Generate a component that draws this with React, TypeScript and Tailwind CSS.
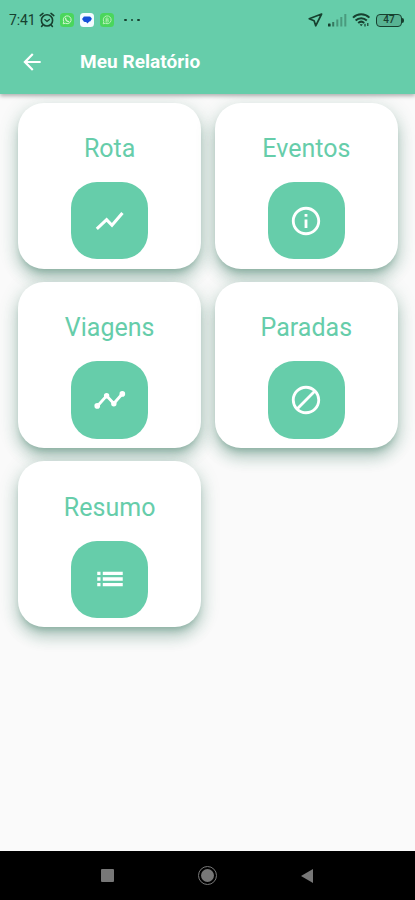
import type { ReactNode } from 'react'
import { MdArrowBack, MdBlock, MdInfoOutline } from 'react-icons/md'

function RouteIcon() {
  return (
    <svg width="34" height="34" viewBox="0 0 24 24" fill="none" stroke="currentColor" strokeWidth="2.2">
      <path d="M2.7 17.5 9.6 11.1l3.8 3.9 7.4-8.6" />
    </svg>
  )
}

function TripsIcon() {
  return (
    <svg width="34" height="34" viewBox="0 0 24 24" fill="currentColor">
      <path d="M3 16.4 9.6 9l5.1 5.5 6-6.9" fill="none" stroke="currentColor" strokeWidth="2" />
      <circle cx="3" cy="16.2" r="2" />
      <circle cx="9.6" cy="9" r="1.9" />
      <circle cx="14.7" cy="14.6" r="1.9" />
      <circle cx="20.7" cy="7.7" r="2" />
    </svg>
  )
}

function SummaryIcon() {
  return (
    <svg width="34" height="34" viewBox="0 0 24 24" fill="currentColor">
      <path d="M3 6.8h2.3v2.3H3zM3 10.85h2.3v2.3H3zM3 14.9h2.3v2.3H3z" />
      <path d="M6.9 6.8H21v2.3H6.9zM6.9 10.85H21v2.3H6.9zM6.9 14.9H21v2.3H6.9z" />
    </svg>
  )
}

const reports: { name: string; icon: ReactNode }[] = [
  { name: 'Rota',    icon: <RouteIcon /> },
  { name: 'Eventos', icon: <MdInfoOutline size={34} /> },
  { name: 'Viagens', icon: <TripsIcon /> },
  { name: 'Paradas', icon: <MdBlock size={34} /> },
  { name: 'Resumo',  icon: <SummaryIcon /> },
]

function AlarmIcon() {
  return (
    <svg width="16" height="16" viewBox="0 0 16 16" fill="none" stroke="#17402f" strokeWidth="1.6" strokeLinecap="round">
      <circle cx="8" cy="8.4" r="5.6" />
      <path d="M1.2 3.6 4 1.4M14.8 3.6 12 1.4M3.6 13.2l-1 1.2M12.4 13.2l1 1.2" />
      <path d="M5.8 7.6 8 9.4l2.4-2" strokeWidth="1.3" />
    </svg>
  )
}

function ChatBadge() {
  return (
    <svg width="14" height="14" viewBox="0 0 14 14" fill="none">
      <rect width="14" height="14" rx="3.5" fill="#4ad65c" />
      <path d="m3.2 10.8.6-2.1a3.9 3.9 0 1 1 1.5 1.5z" stroke="#d2f7cf" strokeWidth="1" />
      <path d="M5.6 5.2c0 2 1.4 3.2 3.1 3.4" stroke="#d2f7cf" strokeWidth="1.2" strokeLinecap="round" />
    </svg>
  )
}

function MessageBadge() {
  return (
    <svg width="14" height="14" viewBox="0 0 14 14">
      <rect width="14" height="14" rx="3.5" fill="#f4fbff" />
      <path d="M4.6 3.4h4.8a1.5 1.5 0 0 1 1.5 1.2c1.1.3 1.1 2.3 0 2.6a1.7 1.7 0 0 1-1.5 1.4L7.3 10.4 6.2 8.9H4.8A1.7 1.7 0 0 1 3.2 7.4c-1.2-.3-1.2-2.4-.1-2.7a1.6 1.6 0 0 1 1.5-1.3z" fill="#1450d8" />
    </svg>
  )
}

function BusinessBadge() {
  return (
    <svg width="14" height="14" viewBox="0 0 14 14" fill="none">
      <rect width="14" height="14" rx="3.5" fill="#4ad65c" />
      <path d="m3.2 10.8.6-2.1a3.9 3.9 0 1 1 1.5 1.5z" stroke="#b9f2b9" strokeWidth="1" />
      <path d="M6 9V5h1.3a1 1 0 0 1 0 2H6h1.5a1 1 0 0 1 0 2z" stroke="#b9f2b9" strokeWidth=".8" />
    </svg>
  )
}

function LocationIcon() {
  return (
    <svg width="15" height="14" viewBox="0 0 15 14" fill="none" stroke="#17402f" strokeWidth="1.7" strokeLinejoin="round">
      <path d="M13.6 1 1.2 5.8l4.9 2L7.7 12.8z" />
    </svg>
  )
}

function SignalIcon() {
  return (
    <svg width="19" height="13" viewBox="0 0 19 13" fill="#17402f">
      <rect x="0" y="9.5" width="2.6" height="3" rx=".6" />
      <rect x="4.2" y="8" width="2" height="4.5" opacity=".6" />
      <rect x="8.3" y="5.5" width="2" height="7" opacity=".4" />
      <rect x="12.3" y="3" width="2" height="9.5" opacity=".35" />
      <rect x="16.3" y="0" width="2" height="12.5" opacity=".35" />
    </svg>
  )
}

function WifiIcon() {
  return (
    <svg width="19" height="14" viewBox="0 0 19 14" fill="none" stroke="#17402f" strokeWidth="2">
      <path d="M1 4.6C5.6.2 12.8.2 17.4 4.6" />
      <path d="M3.6 7.4c3.2-3 8-3 11.2 0" />
      <path d="M6.2 10c1.8-1.6 4.2-1.6 6 0" />
      <path d="M7.6 11.2h3.2l-1.6 2z" fill="#17402f" stroke="none" />
      <path d="M13 13.4v-2.6M15.8 10v3" strokeWidth="1.2" />
    </svg>
  )
}

function BatteryIcon() {
  return (
    <div className="flex items-center">
      <div className="flex h-[13px] w-[26px] items-center justify-center rounded-[4px] border-[1.5px] border-[#17402f] bg-[#58b393] text-[10px] leading-none font-medium text-[#17402f]">
        47
      </div>
      <div className="h-[5px] w-[2px] rounded-r-sm bg-[#17402f]" />
    </div>
  )
}

function StatusBar() {
  return (
    <div className="flex h-[38px] items-center justify-between pt-[2px] pr-[11px] pl-[9px]">
      <div className="flex items-center">
        <span className="w-[30px] text-[14px] tracking-[-0.1px] text-[#17402f]">7:41</span>
        <AlarmIcon />
        <div className="ml-[5px] flex items-center gap-[6px]">
          <ChatBadge />
          <MessageBadge />
          <BusinessBadge />
        </div>
        <div className="ml-[10px] flex gap-[4px]">
          <span className="size-[2.5px] rounded-full bg-[#17402f]" />
          <span className="size-[2.5px] rounded-full bg-[#17402f]" />
          <span className="size-[2.5px] rounded-full bg-[#17402f]" />
        </div>
      </div>
      <div className="flex items-center gap-[5px]">
        <LocationIcon />
        <SignalIcon />
        <WifiIcon />
        <BatteryIcon />
      </div>
    </div>
  )
}

function ReportCard({ name, icon }: { name: string; icon: ReactNode }) {
  return (
    <button className="flex h-[166px] flex-col items-center rounded-[26px] bg-white pt-[30.3px] shadow-[0_6px_6px_-3px_rgba(40,110,85,0.32),0_10px_14px_1px_rgba(40,110,85,0.22),0_4px_18px_3px_rgba(40,110,85,0.14)]">
      <span className="h-[49px] text-[25px] leading-[32px] font-normal tracking-[0.02px] text-[#66cdaa]">
        {name}
      </span>
      <span className="flex size-[77.5px] items-center justify-center rounded-[26px] bg-[#66cdaa] text-white">
        {icon}
      </span>
    </button>
  )
}

export default function App() {
  return (
    <div className="flex h-[900px] w-[415px] flex-col overflow-hidden bg-[#fafafa] font-['Roboto',sans-serif]">

      {/* App bar */}
      <header className="relative z-10 h-[93.5px] shrink-0 bg-[#66cdaa] shadow-[0_2px_4px_rgba(0,0,0,0.3)]">
        <StatusBar />
        <div className="flex h-[48px] items-center pl-[19px] text-white">
          <MdArrowBack size={26} />
          <h1 className="ml-[35px] pt-px text-[19px] font-bold tracking-[0.05px]">Meu Relatório</h1>
        </div>
      </header>

      {/* Reports */}
      <main className="flex-1 pt-[9px] pr-[17px] pl-[18px]">
        <div className="grid grid-cols-2 gap-x-[13.3px] gap-y-[13.4px]">
          {reports.map((report) => (
            <ReportCard key={report.name} name={report.name} icon={report.icon} />
          ))}
        </div>
      </main>

      {/* Navigation bar */}
      <nav className="flex h-[49px] shrink-0 items-center justify-between bg-black pr-[102px] pl-[101px]">
        <span className="size-[13px] rounded-[1px] bg-[#777]" />
        <span className="flex size-[19px] items-center justify-center rounded-full border-[1.5px] border-[#777]">
          <span className="size-[13px] rounded-full bg-[#777]" />
        </span>
        <svg width="12" height="14" viewBox="0 0 12 14" fill="#777">
          <path d="M12 0v14L0 7z" />
        </svg>
      </nav>

    </div>
  )
}
